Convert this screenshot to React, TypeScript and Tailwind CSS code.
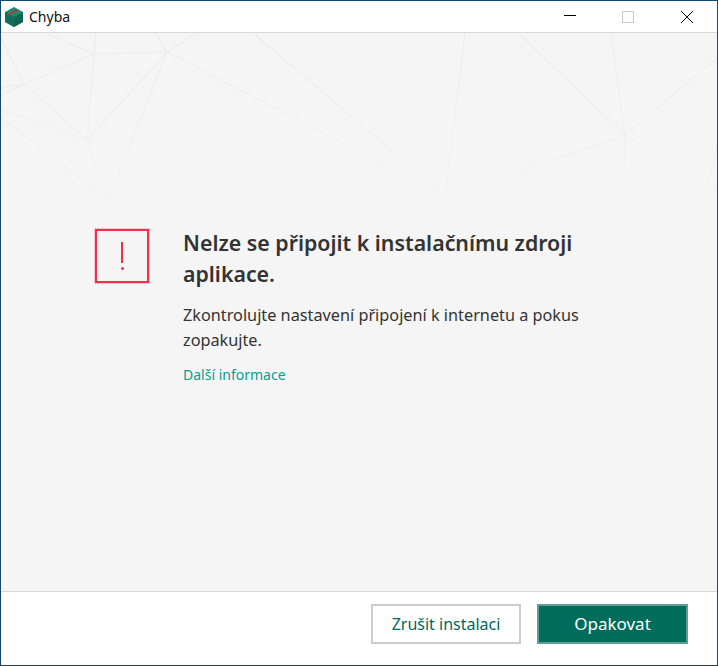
import React from 'react';

const lines = [
  // left cluster
  [94, 54, 45, 33], [94, 54, 96, 33], [94, 54, 167, 52], [94, 54, 0, 95], [94, 54, 87, 140],
  [167, 52, 155, 33], [167, 52, 197, 33], [167, 52, 87, 140], [167, 52, 108, 200], [167, 52, 445, 196],
  [24, 84, 0, 88], [24, 84, 0, 37], [24, 84, 87, 140],
  [87, 140, 0, 110], [87, 140, 108, 200], [108, 200, 0, 117],
  // middle and right
  [445, 196, 253, 33], [445, 196, 465, 33], [445, 196, 625, 135], [445, 196, 398, 200],
  [625, 135, 518, 33], [625, 135, 611, 33], [625, 135, 718, 57], [625, 135, 623, 212], [625, 135, 708, 187],
  [708, 187, 718, 140], [708, 187, 697, 212], [708, 187, 718, 192],
];

const Backdrop: React.FC = () => (
  <svg className="absolute top-0 left-0" width="716" height="180" viewBox="1 33 716 180" fill="none">
    <defs>
      <linearGradient id="fade" gradientUnits="userSpaceOnUse" x1="0" y1="33" x2="0" y2="213">
        <stop offset="0" stopColor="#ececec" />
        <stop offset="0.7" stopColor="#f0f0f0" />
        <stop offset="1" stopColor="#f5f5f5" />
      </linearGradient>
    </defs>
    {lines.map(([x1, y1, x2, y2], i) => (
      <path key={i} d={`M${x1} ${y1}L${x2} ${y2}`} stroke="url(#fade)" strokeWidth="1.2" />
    ))}
  </svg>
);

const Logo: React.FC = () => (
  <svg width="18" height="20" viewBox="0 0 18 20">
    <path d="M9 0L18 5V15L9 20L0 15V5Z" fill="#1b8a72" />
    <path d="M9 10L18 5V15L9 20Z" fill="#0f6654" />
    <path d="M0 5L9 10V20L0 15Z" fill="#136f5d" />
    <path d="M3 8.5L3 6.5L12 2.5L14 3.5Z" fill="#b23b3b" />
  </svg>
);

export default function App() {
  return (
    <div className="w-[718px] h-[666px] flex flex-col bg-white border border-[#114a6b] font-['Noto_Sans',sans-serif] overflow-hidden">
      {/* Title bar */}
      <div className="h-[31px] shrink-0 flex items-center justify-between bg-white">
        <div className="flex items-center pl-1 gap-[6px]">
          <Logo />
          <span className="text-[14px] text-[#111]">Chyba</span>
        </div>
        <div className="flex h-full items-center pr-[1px]">
          <div className="w-[56px] flex justify-center">
            <svg width="12" height="12" viewBox="0 0 12 12"><path d="M0 4.5H12" stroke="#000" /></svg>
          </div>
          <div className="w-[60px] flex justify-center">
            <svg width="12" height="12" viewBox="0 0 12 12"><rect x="0.5" y="0.5" width="11" height="11" fill="none" stroke="#ccc" /></svg>
          </div>
          <div className="w-[58px] flex justify-center">
            <svg width="12" height="12" viewBox="0 0 12 12"><path d="M0 0L12 12M12 0L0 12" stroke="#000" /></svg>
          </div>
        </div>
      </div>

      {/* Body */}
      <main className="relative flex-1 bg-[#f5f5f5] border-t border-[#d9d9d9] pl-[94px] pt-[196px] flex items-start">
        <Backdrop />
        <div className="relative w-[54px] h-[54px] shrink-0 border-2 border-[#f0304a] shadow-[0_0_0_1px_#f9c4cb] flex flex-col items-center pt-[11px]">
          <div className="w-[2px] h-[21px] bg-[#f0304a]" />
          <div className="w-[3px] h-[3px] mt-[4px] rounded-full bg-[#f0304a]" />
        </div>
        <div className="relative ml-[34px] w-[430px] -mt-[2px]">
          <h1 className="text-[21.33px] leading-[31px] font-semibold text-[#333]">Nelze se připojit k instalačnímu zdroji aplikace.</h1>
          <p className="mt-[14px] text-[16.25px] leading-[25px] text-[#333]">Zkontrolujte nastavení připojení k internetu a pokus zopakujte.</p>
          <a className="block mt-[12px] text-[14px] leading-[20px] text-[#00a093]">Další informace</a>
        </div>
      </main>

      {/* Footer */}
      <footer className="h-[74px] shrink-0 bg-white border-t border-[#d9d9d9] flex items-start justify-end gap-4 pt-3 pr-[29px]">
        <button className="w-[150px] h-[40px] border-2 border-[#cccccc] bg-white text-[#00695a] text-[16px]">Zrušit instalaci</button>
        <button className="w-[151px] h-[40px] border-2 border-[#5f9f91] bg-[#006d5c] text-white text-[17px]">Opakovat</button>
      </footer>
    </div>
  );
}
